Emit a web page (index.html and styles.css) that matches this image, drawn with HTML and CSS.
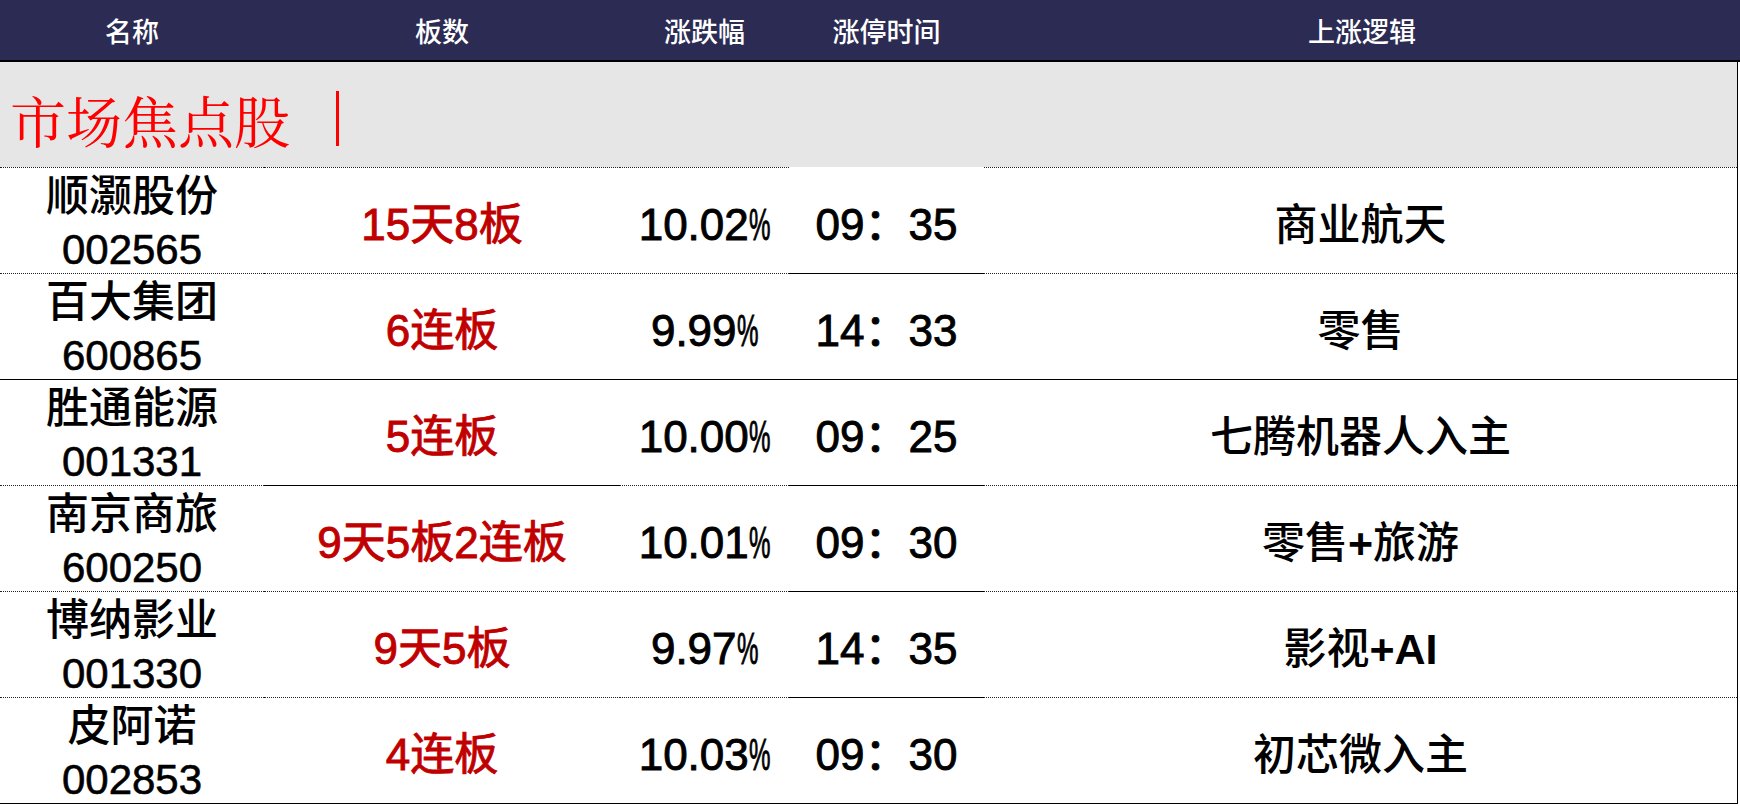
FILE: index.html
```html
<!DOCTYPE html>
<html lang="zh-CN">
<head>
<meta charset="utf-8">
<title>市场焦点股</title>
<link rel="stylesheet" href="styles.css">
</head>
<body>
<div class="sheet">
  <div class="head">
    <div>名称</div>
    <div>板数</div>
    <div>涨跌幅</div>
    <div>涨停时间</div>
    <div>上涨逻辑</div>
  </div>
  <div class="body">
    <div class="band"><span class="title">市场焦点股</span><span class="bar"></span></div>

    <div class="row first">
      <div class="n"><span class="nm">顺灏股份</span><span class="code">002565</span></div>
      <div class="b">15天8板</div>
      <div class="p">10.02<span class="pc">%</span></div>
      <div class="t">09：35</div>
      <div class="l">商业航天</div>
    </div>

    <div class="row solid">
      <div class="n"><span class="nm">百大集团</span><span class="code">600865</span></div>
      <div class="b">6连板</div>
      <div class="p">9.99<span class="pc">%</span></div>
      <div class="t">14：33</div>
      <div class="l">零售</div>
    </div>

    <div class="row">
      <div class="n"><span class="nm">胜通能源</span><span class="code">001331</span></div>
      <div class="b s">5连板</div>
      <div class="p">10.00<span class="pc">%</span></div>
      <div class="t">09：25</div>
      <div class="l">七腾机器人入主</div>
    </div>

    <div class="row">
      <div class="n"><span class="nm">南京商旅</span><span class="code">600250</span></div>
      <div class="b">9天5板2连板</div>
      <div class="p">10.01<span class="pc">%</span></div>
      <div class="t">09：30</div>
      <div class="l">零售<span class="lat">+</span>旅游</div>
    </div>

    <div class="row">
      <div class="n"><span class="nm">博纳影业</span><span class="code">001330</span></div>
      <div class="b">9天5板</div>
      <div class="p">9.97<span class="pc">%</span></div>
      <div class="t">14：35</div>
      <div class="l">影视<span class="lat">+AI</span></div>
    </div>

    <div class="row solid">
      <div class="n"><span class="nm">皮阿诺</span><span class="code">002853</span></div>
      <div class="b">4连板</div>
      <div class="p">10.03<span class="pc">%</span></div>
      <div class="t">09：30</div>
      <div class="l">初芯微入主</div>
    </div>
  </div>
</div>
</body>
</html>
```

FILE: styles.css
```css
html, body {
  margin: 0;
  padding: 0;
  background: #ffffff;
}

body {
  font-family: "Liberation Sans", "Noto Sans CJK SC", sans-serif;
  color: #000;
}

.sheet {
  width: 1740px;
}

.head {
  display: grid;
  grid-template-columns: 264px 356px 169px 195px 1fr;
  height: 62px;
  box-sizing: border-box;
  background: #2c2b53;
  border-bottom: 2px solid #000;
  color: #fff;
  font-family: "Noto Sans CJK SC", sans-serif;
  font-weight: 500;
  font-size: 27px;
  align-items: center;
  text-align: center;
}

.body {
  width: 1737px;
  border-right: 1px solid #000;
}

.band {
  height: 105px;
  box-sizing: border-box;
  background: #e7e6e6;
  display: flex;
  align-items: center;
  padding-left: 10px;
  padding-top: 8px;
}

.title {
  color: #ff0000;
  font-family: "Noto Serif CJK SC", serif;
  font-size: 56px;
  line-height: 1;
}

.bar {
  width: 3px;
  height: 55px;
  background: #ff0000;
  margin-left: 46px;
}

.row {
  display: grid;
  grid-template-columns: 264px 356px 169px 195px 753px;
  grid-template-rows: 100%;
  height: 106px;
}

.row > div {
  box-sizing: border-box;
  min-height: 0;
  border-bottom: 1px dotted #222;
  display: flex;
  flex-direction: row;
  align-items: center;
  justify-content: center;
  padding-top: 9px;
  font-size: 44px;
  line-height: 1;
  white-space: nowrap;
}

.row.first {
  height: 107px;
}

.row.first > div {
  border-top: 1px dotted #222;
}

.row.first > .t {
  border-top-color: transparent;
}

.row > .t,
.row > .b.s,
.row.solid > div {
  border-bottom: 1px solid #000;
}

.row > .n {
  flex-direction: column;
  padding-top: 5px;
}

.nm {
  font-size: 43px;
  font-weight: 500;
  line-height: 54px;
}

.code {
  font-size: 42px;
  line-height: 54px;
  -webkit-text-stroke: 0.6px #000;
}

.b {
  color: #c00000;
  -webkit-text-stroke: 0.9px #c00000;
}

.p,
.t {
  -webkit-text-stroke: 0.9px #000;
}

.pc {
  display: inline-block;
  transform: scaleX(0.55);
  transform-origin: left center;
  margin-right: -0.4em;
}

.row > .l {
  font-size: 43px;
  font-weight: 500;
}

.lat {
  font-weight: 700;
}
```
